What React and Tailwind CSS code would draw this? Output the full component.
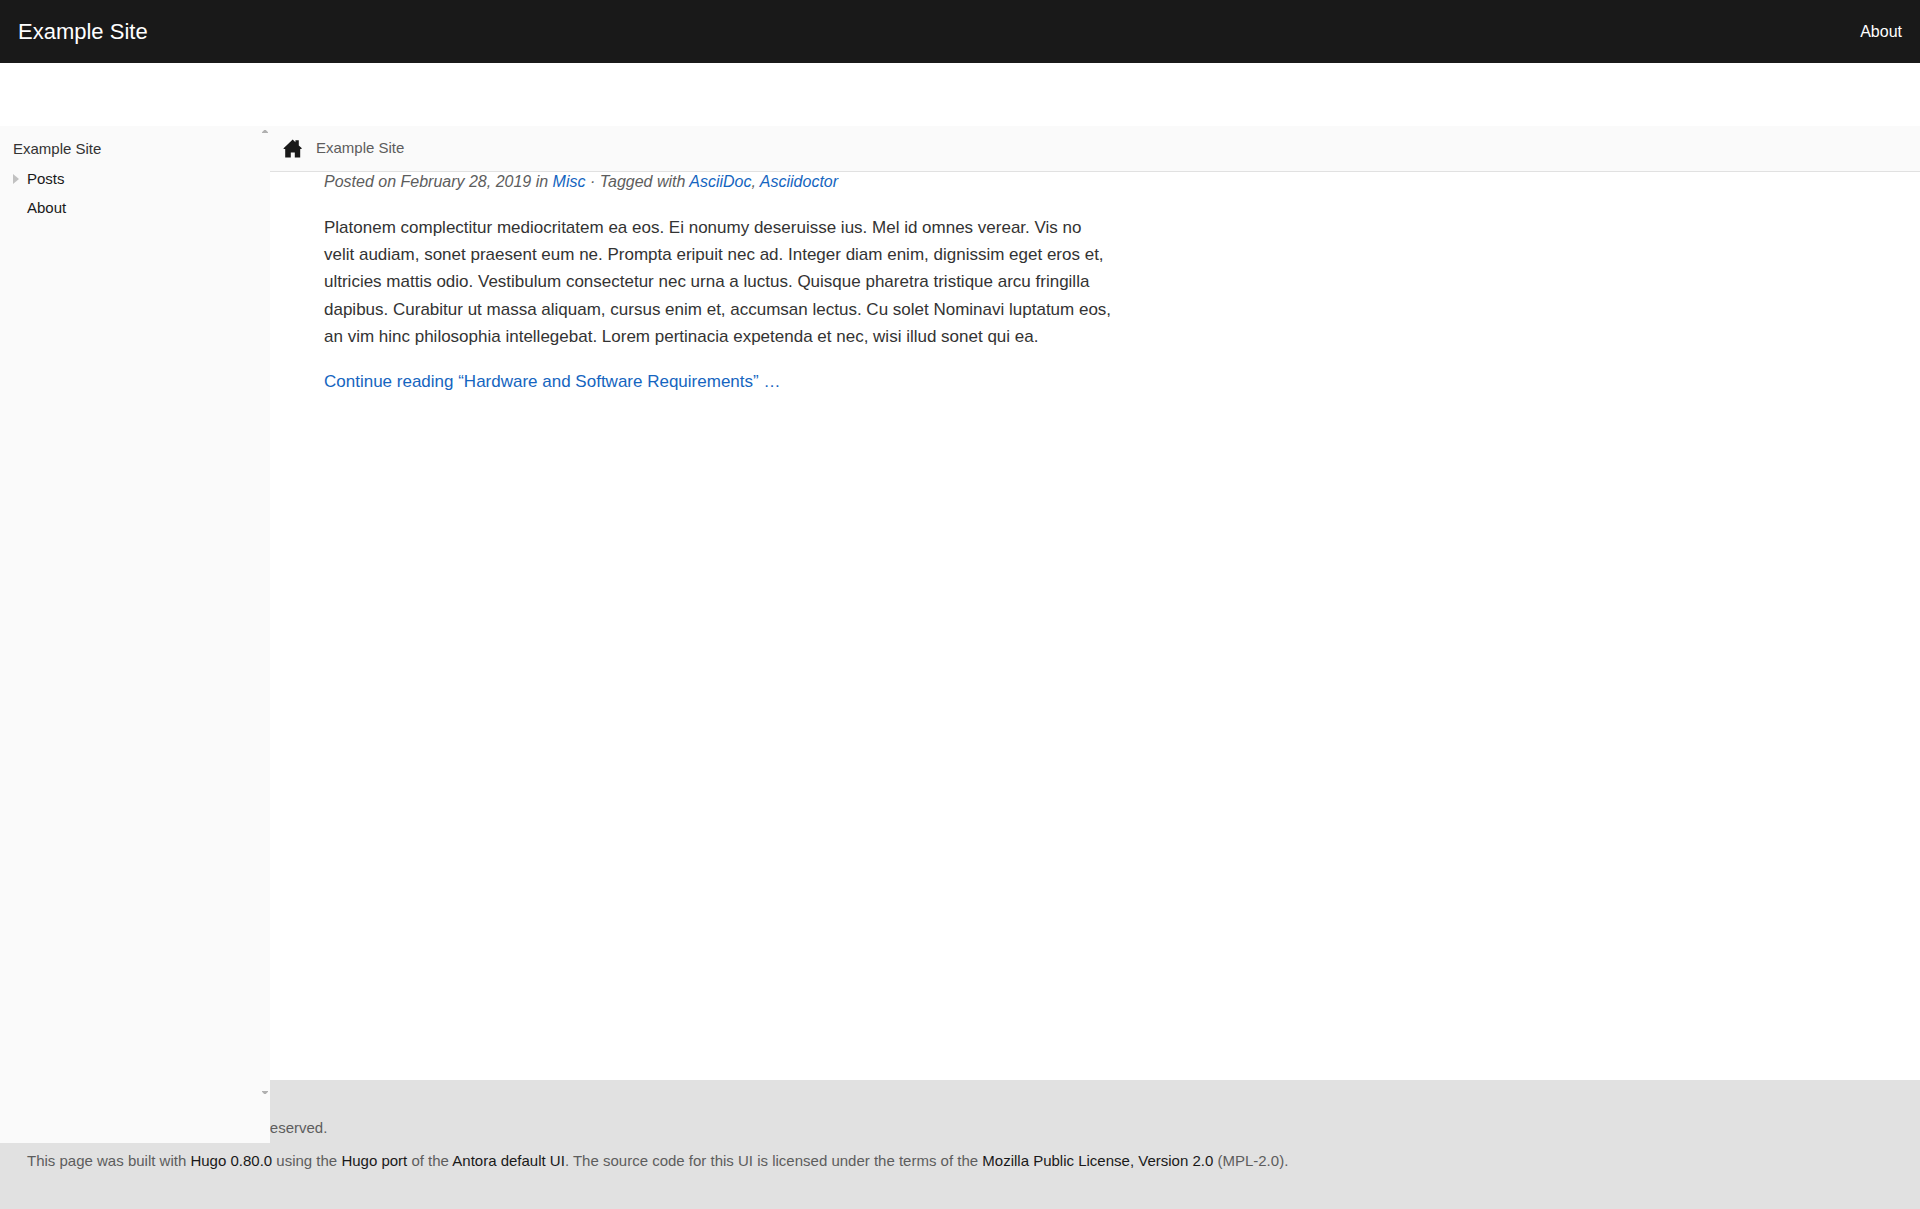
const footerLink = 'text-[#191919] hover:underline';
const articleLink = 'text-[#1565c0] hover:underline';

function HomeIcon() {
  return (
    <svg viewBox="0 0 20 20" className="size-5" fill="#191919" aria-hidden="true">
      <path d="M9.7 0.6 L12.4 3.2 V1.2 H15.8 V6.4 L18.6 9 V10 H17.2 V18.6 H11.8 V13.6 H7.8 V18.6 H2.2 V10 H0.6 V9.2 Z" />
    </svg>
  );
}

function ScrollArrow({ className }) {
  return (
    <svg viewBox="0 0 6 3" className={className} fill="#b0b0b0" aria-hidden="true">
      <path d="M0 3 V2.2 L2.2 0 H3.8 L6 2.2 V3 Z" />
    </svg>
  );
}

export default function App() {
  return (
    <div className="flex min-h-screen flex-col bg-white font-['Liberation_Sans',Arial,sans-serif] text-[#333333]">
      <header className="flex h-[63px] items-center justify-between bg-[#191919] px-[18px] text-white">
        <a href="#home" className="text-[22px]">Example Site</a>
        <nav>
          <a href="#about" className="text-base">About</a>
        </nav>
      </header>

      <div className="flex grow pt-[63px]">
        <aside className="relative z-10 -mb-[63px] flex w-[270px] shrink-0 bg-[#fafafa]">
          <nav className="grow px-[13px] py-2">
            <h3 className="text-[15px] leading-[30px]">
              <a href="#home">Example Site</a>
            </h3>
            <ul className="text-[15px] leading-[29px] text-[#191919]">
              <li className="flex items-center">
                <button type="button" aria-label="Expand Posts" className="w-[14px]">
                  <svg viewBox="0 0 6 10" className="h-[10px] w-[6px]" fill="#c1c1c1" aria-hidden="true">
                    <path d="M0 0 L6 5 L0 10 Z" />
                  </svg>
                </button>
                <a href="#posts">Posts</a>
              </li>
              <li className="pl-[14px]">
                <a href="#about">About</a>
              </li>
            </ul>
          </nav>
          <div className="flex flex-col justify-between pt-1 pr-[2px] pb-[49px]">
            <ScrollArrow className="h-[3px] w-[6px]" />
            <ScrollArrow className="h-[3px] w-[6px] rotate-180" />
          </div>
        </aside>

        <main className="min-w-0 grow">
          <div className="flex h-[46px] items-center border-b border-[#e1e1e1] bg-[#fafafa] px-[13px]">
            <a href="#home" aria-label="Home">
              <HomeIcon />
            </a>
            <nav aria-label="breadcrumbs" className="pl-[13px] text-[15px] text-[#5d5d5d]">
              <a href="#home">Example Site</a>
            </nav>
          </div>
          <article className="max-w-[900px] px-[54px] text-[17px] leading-[1.6]">
            <p className="text-base leading-5 text-[#5d5d5d] italic">
              Posted on February 28, 2019 in <a href="#misc" className={articleLink}>Misc</a> · Tagged with{' '}
              <a href="#asciidoc" className={articleLink}>AsciiDoc</a>,{' '}
              <a href="#asciidoctor" className={articleLink}>Asciidoctor</a>
            </p>
            <p className="mt-[22px]">
              Platonem complectitur mediocritatem ea eos. Ei nonumy deseruisse ius. Mel id omnes verear. Vis no velit
              audiam, sonet praesent eum ne. Prompta eripuit nec ad. Integer diam enim, dignissim eget eros et,
              ultricies mattis odio. Vestibulum consectetur nec urna a luctus. Quisque pharetra tristique arcu
              fringilla dapibus. Curabitur ut massa aliquam, cursus enim et, accumsan lectus. Cu solet Nominavi
              luptatum eos, an vim hinc philosophia intellegebat. Lorem pertinacia expetenda et nec, wisi illud sonet
              qui ea.
            </p>
            <p className="mt-[18px]">
              <a href="#continue" className={articleLink}>Continue reading “Hardware and Software Requirements” …</a>
            </p>
          </article>
        </main>
      </div>

      <footer className="flex flex-col gap-2 bg-[#e1e1e1] px-[27px] pt-[35px] pb-9 text-[15px] leading-[25px] text-[#5d5d5d]">
        <p>Copyright © 2021, Antora. All rights reserved.</p>
        <p>
          This page was built with <a href="#hugo" className={footerLink}>Hugo 0.80.0</a> using the{' '}
          <a href="#port" className={footerLink}>Hugo port</a> of the{' '}
          <a href="#antora" className={footerLink}>Antora default UI</a>. The source code for this UI is licensed under
          the terms of the <a href="#mpl" className={footerLink}>Mozilla Public License, Version 2.0</a> (MPL-2.0).
        </p>
      </footer>
    </div>
  );
}
